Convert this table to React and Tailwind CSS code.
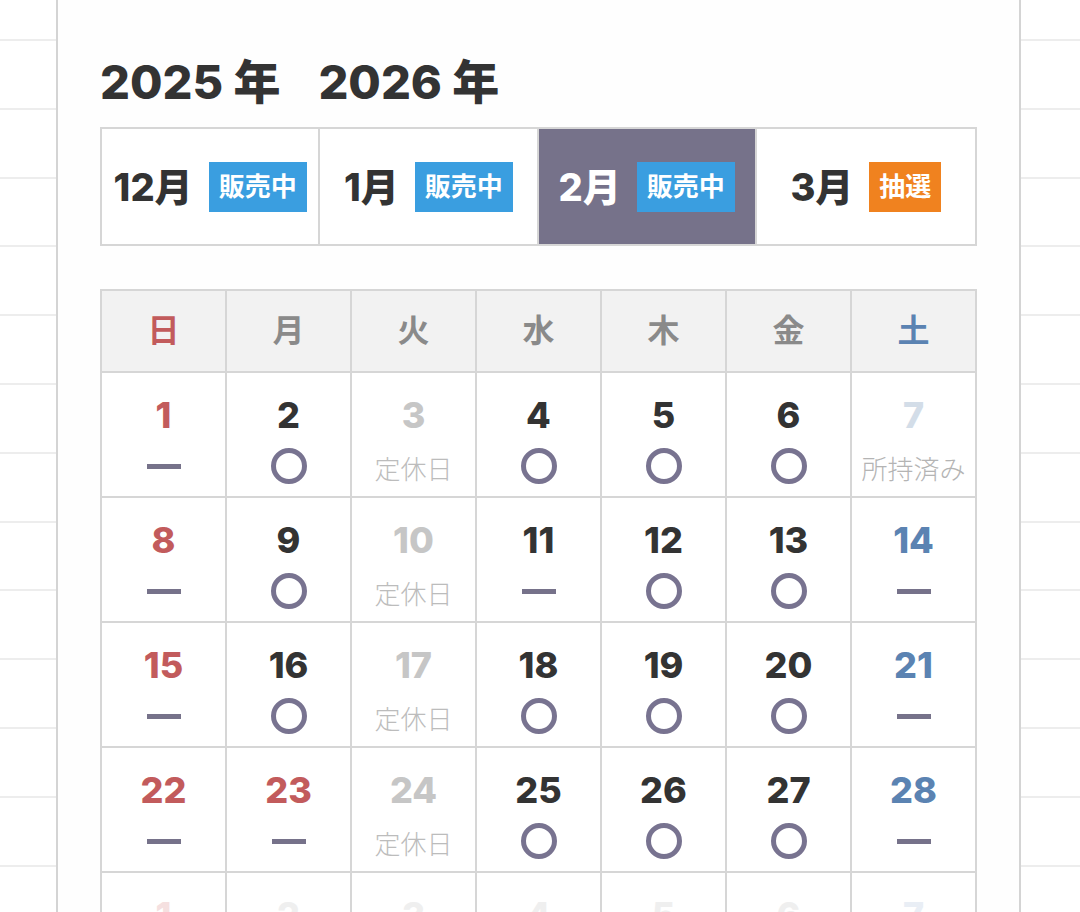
import React from 'react';

const FONT = { fontFamily: 'Inter, "Noto Sans CJK JP", sans-serif' };

const TABS = [
  { month: '12月', badge: '販売中', kind: 'sale' },
  { month: '1月', badge: '販売中', kind: 'sale' },
  { month: '2月', badge: '販売中', kind: 'sale', active: true },
  { month: '3月', badge: '抽選', kind: 'lottery' },
];

const WEEKDAYS = [
  { label: '日', cls: 'text-[#c25b5c]' },
  { label: '月', cls: 'text-[#8a8a8a]' },
  { label: '火', cls: 'text-[#8a8a8a]' },
  { label: '水', cls: 'text-[#8a8a8a]' },
  { label: '木', cls: 'text-[#8a8a8a]' },
  { label: '金', cls: 'text-[#8a8a8a]' },
  { label: '土', cls: 'text-[#5b83b2]' },
];

const NUM_COLOR = {
  day: 'text-[#333333]',
  sun: 'text-[#c25b5c]',
  sat: 'text-[#5b83b2]',
  closed: 'text-[#c6c6c6]',
  owned: 'text-[#d3dde8]',
  nextSun: 'text-[#f5e0e0]',
  next: 'text-[#efefef]',
  nextSat: 'text-[#e9eef5]',
};

// [day, colour, status]
const WEEKS = [
  [[1, 'sun', 'dash'], [2, 'day', 'open'], [3, 'closed', 'closed'], [4, 'day', 'open'], [5, 'day', 'open'], [6, 'day', 'open'], [7, 'owned', 'owned']],
  [[8, 'sun', 'dash'], [9, 'day', 'open'], [10, 'closed', 'closed'], [11, 'day', 'dash'], [12, 'day', 'open'], [13, 'day', 'open'], [14, 'sat', 'dash']],
  [[15, 'sun', 'dash'], [16, 'day', 'open'], [17, 'closed', 'closed'], [18, 'day', 'open'], [19, 'day', 'open'], [20, 'day', 'open'], [21, 'sat', 'dash']],
  [[22, 'sun', 'dash'], [23, 'sun', 'dash'], [24, 'closed', 'closed'], [25, 'day', 'open'], [26, 'day', 'open'], [27, 'day', 'open'], [28, 'sat', 'dash']],
  [[1, 'nextSun', null], [2, 'next', null], [3, 'next', null], [4, 'next', null], [5, 'next', null], [6, 'next', null], [7, 'nextSat', null]],
];

function Status({ type }) {
  if (type === 'open') {
    return <div className="mt-[15px] h-[36px] w-[36px] rounded-full border-[5px] border-[#787390]" />;
  }
  if (type === 'dash') {
    return (
      <div className="mt-[15px] flex h-[36px] items-center">
        <div className="h-[5px] w-[34px] bg-[#76728a]" />
      </div>
    );
  }
  if (type === 'closed') {
    return <div className="mt-[24px] text-[26px] leading-none font-light text-[#bcbcbc]">定休日</div>;
  }
  if (type === 'owned') {
    return <div className="mt-[24px] text-[26px] leading-none font-light text-[#b4b4b4] whitespace-nowrap">所持済み</div>;
  }
  return null;
}

function Lines() {
  return (
    <div className="flex flex-col">
      <div className="h-[39px]" />
      {Array.from({ length: 13 }).map((_, i) => (
        <div key={i} className="h-[68.8px] border-t-2 border-[#ededed]" />
      ))}
    </div>
  );
}

export default function App() {
  return (
    <div className="flex h-[912px] w-[1080px] overflow-hidden bg-white" style={FONT}>
      <div className="w-[56px] shrink-0">
        <Lines />
      </div>

      <main className="w-[965px] shrink-0 border-x-2 border-[#d4d4d4] bg-[#fefefe] px-[42px] pt-[58px]">
        <h2 className="flex gap-[38px] text-[47px] leading-none font-extrabold text-[#333333]">
          <span>2025 年</span>
          <span>2026 年</span>
        </h2>

        <div className="mt-[22px] grid h-[119px] grid-cols-4 border-2 border-[#d6d6d6] divide-x-2 divide-[#d6d6d6]">
          {TABS.map((t) => (
            <div
              key={t.month}
              className={`flex items-center justify-center gap-4 ${t.active ? 'bg-[#76728a] text-white' : 'bg-white text-[#333333]'}`}
            >
              <span className="text-[38px] leading-none font-extrabold">{t.month}</span>
              <span
                className={`flex h-[50px] items-center px-[10px] text-[26px] leading-none font-bold text-white ${t.kind === 'sale' ? 'bg-[#3a9ee0]' : 'bg-[#f0821f]'}`}
              >
                {t.badge}
              </span>
            </div>
          ))}
        </div>

        <table className="mt-[43px] w-[877px] table-fixed border-collapse border-2 border-[#d6d6d6]">
          <thead>
            <tr className="bg-[#f2f2f2]">
              {WEEKDAYS.map((w) => (
                <th
                  key={w.label}
                  className={`h-[82px] border-2 border-[#d6d6d6] text-[32px] leading-none font-bold ${w.cls}`}
                >
                  {w.label}
                </th>
              ))}
            </tr>
          </thead>
          <tbody>
            {WEEKS.map((week, wi) => (
              <tr key={wi}>
                {week.map(([day, color, status]) => (
                  <td key={day + '-' + wi} className="h-[125px] border-2 border-[#d6d6d6] bg-white p-0 align-top">
                    <div className="flex flex-col items-center pt-[24px]">
                      <span className={`text-[36px] leading-none font-extrabold ${NUM_COLOR[color]}`}>{day}</span>
                      <Status type={status} />
                    </div>
                  </td>
                ))}
              </tr>
            ))}
          </tbody>
        </table>
      </main>

      <div className="flex-1">
        <Lines />
      </div>
    </div>
  );
}
